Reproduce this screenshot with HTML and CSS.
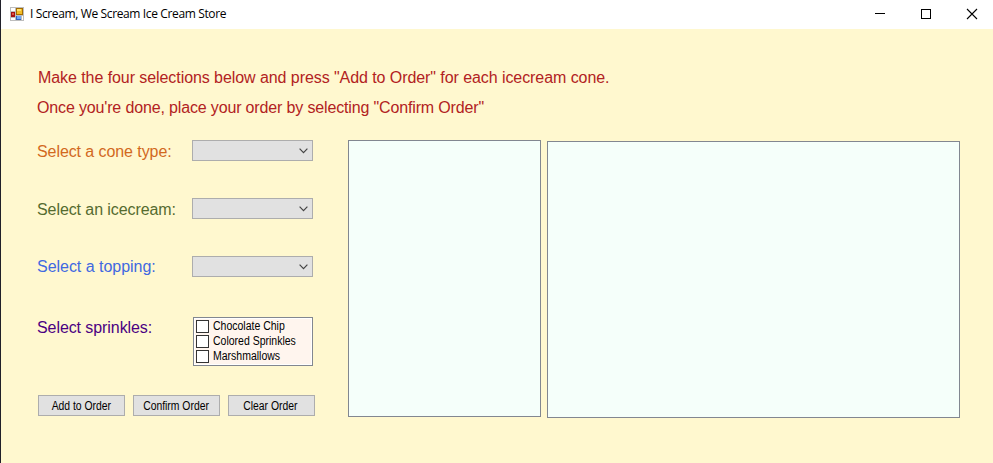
FILE: index.html
```html
<!DOCTYPE html>
<html lang="en">
<head>
<meta charset="utf-8">
<title>I Scream, We Scream Ice Cream Store</title>
<link rel="stylesheet" href="styles.css">
</head>
<body>
<div class="window">
  <header class="titlebar">
    <svg class="app-icon" width="14" height="14" viewBox="0 0 14 14" shape-rendering="crispEdges">
      <path fill="#bdbdbd" d="M0 0h14v14H0z"/>
      <path fill="#fff" d="M1 1h4v3H1zM1 11h4v2H1zM12 9h1v4h-1z"/>
      <path fill="#a36b00" d="M6 1h7v7H6z"/>
      <path fill="#f2bd27" d="M7 2h5v5H7z"/>
      <path fill="#ffe06d" d="M7 2h4v2H7z"/>
      <path fill="#a41212" d="M1 5h4v5H1z"/>
      <path fill="#df5143" d="M2 6h2v2H2z"/>
      <path fill="#3563bd" d="M6 9h5v4H6z"/>
      <path fill="#6da8f7" d="M7 9h4v3H7z"/>
    </svg>
    <span class="title">I Scream, We Scream Ice Cream Store</span>
    <div class="controls">
      <svg width="10" height="10" viewBox="0 0 10 10" shape-rendering="crispEdges"><path d="M0 4h10v1H0z"/></svg>
      <svg width="10" height="10" viewBox="0 0 10 10" shape-rendering="crispEdges"><path fill="none" stroke="#000" d="M.5.5h9v9h-9z"/></svg>
      <svg width="10" height="10" viewBox="0 0 10 10"><path fill="none" stroke="#000" stroke-width="1.1" d="M0 0l10 10M10 0L0 10"/></svg>
    </div>
  </header>
  <main class="form">
    <p class="intro first">Make the four selections below and press "Add to Order" for each icecream cone.</p>
    <p class="intro second">Once you're done, place your order by selecting "Confirm Order"</p>
    <div class="workspace">
      <section class="choices">
        <div class="row">
          <span class="label cone">Select a cone type:</span>
          <div class="combo"><svg width="9" height="6" viewBox="0 0 9 6"><path d="M.6.7l3.9 3.9L8.4.7"/></svg></div>
        </div>
        <div class="row">
          <span class="label icecream">Select an icecream:</span>
          <div class="combo"><svg width="9" height="6" viewBox="0 0 9 6"><path d="M.6.7l3.9 3.9L8.4.7"/></svg></div>
        </div>
        <div class="row last">
          <span class="label topping">Select a topping:</span>
          <div class="combo"><svg width="9" height="6" viewBox="0 0 9 6"><path d="M.6.7l3.9 3.9L8.4.7"/></svg></div>
        </div>
        <div class="row sprinkle-row">
          <span class="label sprinkles">Select sprinkles:</span>
          <div class="checklist">
            <div class="check"><i class="box"></i><span>Chocolate Chip</span></div>
            <div class="check"><i class="box"></i><span>Colored Sprinkles</span></div>
            <div class="check"><i class="box"></i><span>Marshmallows</span></div>
          </div>
        </div>
        <div class="buttons">
          <button><span>Add to Order</span></button>
          <button><span>Confirm Order</span></button>
          <button class="clear"><span>Clear Order</span></button>
        </div>
      </section>
      <div class="panel narrow"></div>
      <div class="panel wide"></div>
    </div>
  </main>
</div>
</body>
</html>
```
FILE: styles.css
```css
* { box-sizing: border-box; }
body { margin: 0; overflow: hidden; font-family: "Liberation Sans", Arial, sans-serif; }
.window { height: 463px; border-left: 1px solid #20202a; background: #fff8cf; }
.titlebar { height: 29px; background: #fff; display: flex; align-items: center; padding: 0 16px 2px 9px; }
.app-icon { margin-right: 6px; }
.title { font: 12px/16px "Open Sans", "Noto Sans", sans-serif; letter-spacing: -0.37px; color: #000; white-space: nowrap; }
.controls { margin-left: auto; display: flex; gap: 36px; }
.controls svg { display: block; overflow: visible; }
.form { padding: 34px 0 0 36px; }
.intro { margin: 0; height: 30px; font-size: 16px; line-height: 30px; color: #b22222; white-space: nowrap; }
.first { padding-left: 1px; letter-spacing: -0.07px; }
.second { letter-spacing: -0.15px; }
.workspace { display: flex; margin-top: 17px; }
.choices { width: 311px; }
.row { display: flex; height: 58px; }
.row.last { height: 61px; }
.label { width: 155px; font-size: 16px; line-height: 24px; letter-spacing: -0.08px; white-space: nowrap; }
.cone { color: #d2691e; }
.icecream { color: #556b2f; }
.topping { color: #4169e1; line-height: 21px; letter-spacing: -0.03px; }
.sprinkles { color: #4b0082; width: 156px; line-height: 22px; }
.combo { width: 121px; height: 21px; border: 1px solid #adadad; background: #e1e1e1; display: flex; align-items: center; justify-content: flex-end; padding-right: 4px; }
.combo path { fill: none; stroke: #444; stroke-width: 1.2; }
.row.sprinkle-row { height: 49px; }
.checklist { width: 120px; height: 49px; border: 1px solid #828790; background: #fff5ee; padding: 1px 2px; box-shadow: inset 0 0 0 1px #fff; }
.check { display: flex; align-items: center; height: 15px; font-size: 12px; line-height: 13px; color: #000; white-space: nowrap; }
.check span { transform: scaleX(0.875); transform-origin: left; margin-top: -1px; }
.box { width: 13px; height: 13px; border: 1px solid #333; background: #fff; margin-right: 4px; }
.buttons { display: flex; gap: 8px; margin: 29px 0 0 1px; }
button { width: 87px; height: 21px; padding: 1px 1px 0 0; border: 1px solid #adadad; background: #e1e1e1; display: flex; justify-content: center; font: 12px/19px "Liberation Sans", Arial, sans-serif; color: #000; white-space: nowrap; }
button span { transform: scaleX(0.865); }
.clear { padding-right: 3px; }
.panel { height: 277px; background: #f5fffa; border: 1px solid #828790; }
.narrow { width: 193px; }
.wide { width: 413px; margin: 1px 0 0 6px; }
```
